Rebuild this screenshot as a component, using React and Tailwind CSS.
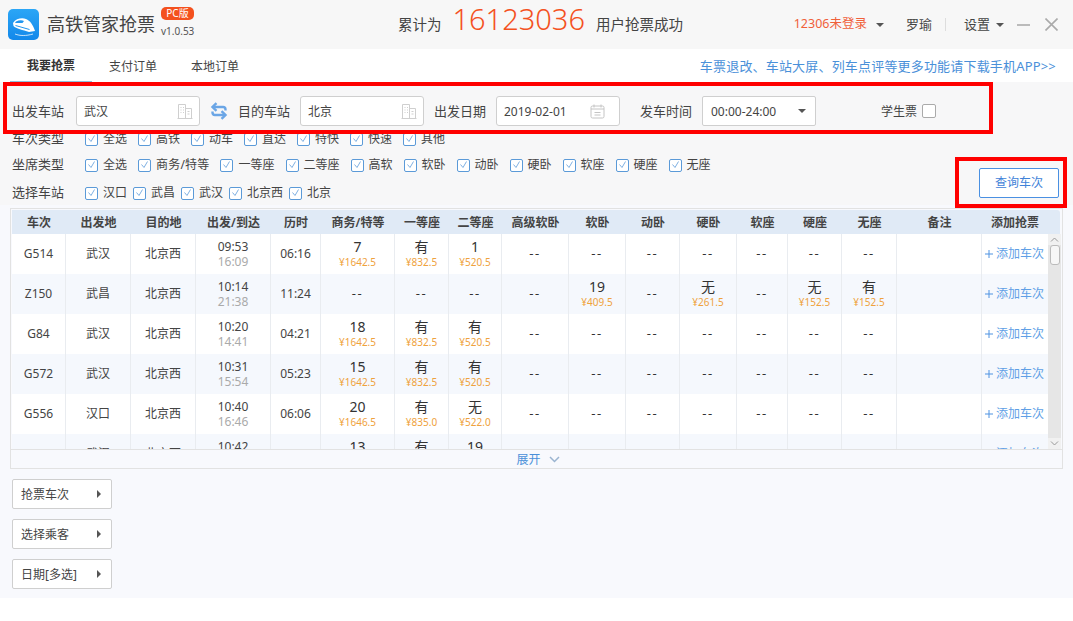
import React from 'react'

const rows = [
  { no: 'G514', from: '武汉', to: '北京西', go: '09:53', arrive: '16:09', dur: '06:16', seats: [['7', '¥1642.5'], ['有', '¥832.5'], ['1', '¥520.5'], 0, 0, 0, 0, 0, 0, 0] },
  { no: 'Z150', from: '武昌', to: '北京西', go: '10:14', arrive: '21:38', dur: '11:24', seats: [0, 0, 0, 0, ['19', '¥409.5'], 0, ['无', '¥261.5'], 0, ['无', '¥152.5'], ['有', '¥152.5']] },
  { no: 'G84', from: '武汉', to: '北京西', go: '10:20', arrive: '14:41', dur: '04:21', seats: [['18', '¥1642.5'], ['有', '¥832.5'], ['有', '¥520.5'], 0, 0, 0, 0, 0, 0, 0] },
  { no: 'G572', from: '武汉', to: '北京西', go: '10:31', arrive: '15:54', dur: '05:23', seats: [['15', '¥1642.5'], ['有', '¥832.5'], ['有', '¥520.5'], 0, 0, 0, 0, 0, 0, 0] },
  { no: 'G556', from: '汉口', to: '北京西', go: '10:40', arrive: '16:46', dur: '06:06', seats: [['20', '¥1646.5'], ['有', '¥835.0'], ['无', '¥522.0'], 0, 0, 0, 0, 0, 0, 0] },
  { no: 'G506', from: '武汉', to: '北京西', go: '10:42', arrive: '16:50', dur: '06:08', seats: [['13', '¥1642.5'], ['有', '¥832.5'], ['19', '¥520.5'], 0, 0, 0, 0, 0, 0, 0] },
]

const headers = ['车次', '出发地', '目的地', '出发/到达', '历时', '商务/特等', '一等座', '二等座', '高级软卧', '软卧', '动卧', '硬卧', '软座', '硬座', '无座', '备注', '添加抢票']

const gridCols = 'grid grid-cols-[54px_65px_65px_75px_50px_74px_54px_53px_67px_57px_54px_57px_51px_54px_55px_85px_66px]'

const Logo = () => (
  <svg width="31" height="31" viewBox="0 0 31 31">
    <path d="M5 14C8 9.500 14 8.500 18 10c4 1.500 7 6 9 12l-6 1C15 21 8 19.500 5.500 17z" fill="#fff" />
    <path d="M8 12.500c3-1.500 6-1.500 8-.5l-1.500 2H7z" fill="#2196f0" />
    <path d="M7.500 16.500l14 4" stroke="#2196f0" strokeWidth="1" fill="none" />
    <path d="M7 25c5 2 11 2 18 0" stroke="#fff" strokeWidth="1" opacity="0.75" fill="none" />
  </svg>
)

const Building = () => (
  <svg width="16" height="15" viewBox="0 0 16 15" fill="none" stroke="#cfcfcf" strokeWidth="1">
    <path d="M1.500 14.500V.500h7v14M8.500 4.500h6v10M.5 14.500h15" />
    <path d="M3.500 3.500h1M6 3.500h1M3.500 6h1M6 6h1M3.500 8.500h1M6 8.500h1M10.500 7.500h2M10.500 10h2" />
  </svg>
)

const Calendar = () => (
  <svg width="15" height="15" viewBox="0 0 15 15" fill="none" stroke="#c4c4c4" strokeWidth="1">
    <rect x="1" y="2" width="13" height="12" rx="1.500" />
    <path d="M1 5h13M4 0.500v3M11 0.500v3M4.500 8.500h6M4.500 11h6" />
  </svg>
)

const Swap = () => (
  <svg width="18" height="18" viewBox="0 0 18 18" fill="none" stroke="#6ba6e6" strokeWidth="2.400">
    <path d="M15.500 8.500V7.500C15.500 6 14.500 5 13 5H3" />
    <path d="M6.500 1.200L2.500 5l4 3.800" />
    <path d="M2.500 9.500v1C2.500 12 3.500 13 5 13h10" />
    <path d="M11.500 9.200l4 3.800-4 3.800" />
  </svg>
)

const Caret = () => (
  <span className="inline-block w-0 h-0 border-x-[4px] border-x-transparent border-t-[4px] border-t-[#555]" />
)

const Check = ({ label, gap = 'mr-[11px]' }) => (
  <span className={`flex items-center ${gap}`}>
    <span className="w-[13px] h-[13px] mr-[5px] border border-[#5b9ad8] rounded-[2px] bg-white flex items-center justify-center">
      <svg width="9" height="8" viewBox="0 0 9 8" fill="none" stroke="#7fb0e2" strokeWidth="1">
        <path d="M1.500 3.500l2.500 3 3.500-6" />
      </svg>
    </span>
    <span className={`text-[12px] text-[#444] whitespace-nowrap ${label.includes('/') ? 'tracking-[0.2px]' : ''}`}>{label}</span>
  </span>
)

const Field = ({ value, icon, className = 'pr-[6px]' }) => (
  <div className={`w-[124px] h-[30px] shrink-0 bg-white border border-[#cfcfcf] rounded-[3px] flex items-center justify-between pl-[7px] text-[12px] text-[#444] ${className}`}>
    <span className="pt-px">{value}</span>
    {icon}
  </div>
)

const FilterRow = ({ title, items, gap, className = '' }) => (
  <div className={`flex items-center h-[20px] ${className}`}>
    <span className="w-[73px] text-[13px] text-[#444] shrink-0">{title}</span>
    {items.map((item) => <Check key={item} label={item} gap={gap} />)}
  </div>
)

const SeatCell = ({ seat }) => (
  <div className="border-r border-[#e9ecf0] flex flex-col items-center justify-center">
    {seat ? (
      <div className="flex flex-col items-center pb-[2px]">
        <span className="text-[14px] leading-[18px] text-[#333]">{seat[0]}</span>
        <span className="text-[10px] leading-[13px] text-[#efa23c]">{seat[1]}</span>
      </div>
    ) : (
      <span className="text-[13px] text-[#333] tracking-[1.5px]">--</span>
    )}
  </div>
)

const Row = ({ row, odd }) => (
  <div className={`${gridCols} h-[40px] shrink-0 text-[12px] text-[#444] ${odd ? 'bg-[#f5f8fd]' : 'bg-white'}`}>
    <div className="border-r border-[#e9ecf0] flex items-center justify-center">{row.no}</div>
    <div className="border-r border-[#e9ecf0] flex items-center justify-center">{row.from}</div>
    <div className="border-r border-[#e9ecf0] flex items-center justify-center">{row.to}</div>
    <div className="border-r border-[#e9ecf0] flex flex-col items-center justify-center leading-[15px]">
      <span>{row.go}</span>
      <span className="text-[#aaa]">{row.arrive}</span>
    </div>
    <div className="border-r border-[#e9ecf0] flex items-center justify-center">{row.dur}</div>
    {row.seats.map((seat, i) => <SeatCell key={i} seat={seat} />)}
    <div className="border-r border-[#e9ecf0]" />
    <div className="flex items-center pl-[3px] text-[#5f9fe6] whitespace-nowrap">
      <svg className="mr-[3px]" width="8" height="8" viewBox="0 0 8 8" stroke="#4f93e2" strokeWidth="1">
        <path d="M4 0v8M0 4h8" />
      </svg>
      添加车次
    </div>
  </div>
)

const SideButton = ({ label }) => (
  <button className="w-[100px] h-[30px] bg-white border border-[#cfcfcf] rounded-[2px] flex items-center justify-between pl-[8px] pr-[10px] text-[12px] text-[#444]">
    <span className="pt-px">{label}</span>
    <span className="w-0 h-0 border-y-[4px] border-y-transparent border-l-[4px] border-l-[#555]" />
  </button>
)

export default function App() {
  return (
    <div className="relative w-[1073px] h-[621px] overflow-hidden bg-white font-['Noto_Sans','Noto_Sans_CJK_SC',sans-serif]">
      {/* Title bar */}
      <div className="h-[49px] bg-[#f7f7f7] flex items-center text-[#444]">
        <div className="w-[31px] h-[31px] ml-[8px] rounded-[5px] bg-gradient-to-b from-[#2ba6f6] to-[#1288ea] shrink-0">
          <Logo />
        </div>
        <span className="ml-[8px] text-[18px] text-[#444] whitespace-nowrap">高铁管家抢票</span>
        <div className="ml-[6px] w-[33px] flex flex-col items-start self-start mt-[7px]">
          <span className="w-[33px] h-[13px] rounded-[5px] bg-[#f4511e] text-white text-[10px] leading-[13px] text-center whitespace-nowrap">PC版</span>
          <span className="mt-[4px] text-[10px] leading-[14px] text-[#555]">v1.0.53</span>
        </div>
        <div className="ml-[204px] flex items-center whitespace-nowrap text-[14.500px]">
          <span>累计为</span>
          <span className="ml-[11px] mr-[11px] mb-[12px] text-[29px] leading-none font-light text-[#f4511e]">16123036</span>
          <span>用户抢票成功</span>
        </div>
        <div className="ml-auto flex items-center whitespace-nowrap text-[13px]">
          <span className="text-[12.500px] text-[#f0603a]">12306未登录</span>
          <span className="ml-[9px] flex"><Caret /></span>
          <span className="ml-[22px]">罗瑜</span>
          <span className="ml-[13px] w-px h-[13px] bg-[#ddd]" />
          <span className="ml-[18px]">设置</span>
          <span className="ml-[6px] flex"><Caret /></span>
          <span className="ml-[13px] w-[13px] h-[2px] bg-[#bbb]" />
          <svg className="ml-[15px] mr-[15px]" width="13" height="13" viewBox="0 0 13 13" stroke="#aaa" strokeWidth="1.600">
            <path d="M.5.500l12 12M12.500.500l-12 12" />
          </svg>
        </div>
      </div>

      {/* Tabs */}
      <div className="h-[33px] bg-white flex items-start">
        <div className="ml-[10px] w-[82px] h-[33px] border-b border-[#8fc0dc] flex items-center justify-center text-[12px] font-semibold text-[#333] pt-px">我要抢票</div>
        <div className="ml-[17px] w-[48px] h-[33px] flex items-center text-[12px] text-[#444] whitespace-nowrap pt-[3px]">支付订单</div>
        <div className="ml-[34px] w-[48px] h-[33px] flex items-center text-[12px] text-[#444] whitespace-nowrap pt-[3px]">本地订单</div>
        <div className="ml-auto mr-[17px] h-[33px] pt-[3px] flex items-center text-[13px] tracking-[0.18px] text-[#4a90d9] whitespace-nowrap">车票退改、车站大屏、列车点评等更多功能请下载手机APP&gt;&gt;</div>
      </div>

      {/* Search + filters */}
      <div className="bg-[#f7f7f8] h-[123px] pt-[14px]">
        <div className="flex items-center h-[30px] pl-[12px]">
          <span className="w-[64px] pt-px text-[13px] text-[#444]">出发车站</span>
          <Field value="武汉" icon={<Building />} />
          <span className="w-[38px] flex justify-center"><Swap /></span>
          <span className="w-[62px] pt-px text-[13px] text-[#444]">目的车站</span>
          <Field value="北京" icon={<Building />} />
          <span className="w-[72px] pt-px text-center text-[13px] text-[#444]">出发日期</span>
          <Field value="2019-02-01" icon={<Calendar />} className="pr-[14px]" />
          <span className="w-[82px] pt-px pr-[10px] text-right text-[13px] text-[#444]">发车时间</span>
          <div className="w-[114px] h-[30px] bg-white border border-[#cfcfcf] rounded-[2px] flex items-center justify-between pl-[8px] pr-[9px] text-[12px] text-[#444]">
            <span className="pt-px">00:00-24:00</span>
            <Caret />
          </div>
          <span className="ml-[65px] pt-px text-[12px] text-[#444]">学生票</span>
          <span className="ml-[5px] w-[14px] h-[14px] bg-white border border-[#aaa] rounded-[2px]" />
        </div>

        <div className="flex justify-between pl-[12px] pr-[14px]">
          <div className="pt-[3px]">
            <FilterRow title="车次类型" items={['全选', '高铁', '动车', '直达', '特快', '快速', '其他']} />
            <FilterRow title="坐席类型" className="mt-[6px]" items={['全选', '商务/特等', '一等座', '二等座', '高软', '软卧', '动卧', '硬卧', '软座', '硬座', '无座']} />
            <FilterRow title="选择车站" className="mt-[8px]" gap="mr-[6px]" items={['汉口', '武昌', '武汉', '北京西', '北京']} />
          </div>
          <button className="mt-[42px] w-[80px] h-[30px] bg-white border border-[#4a90e2] rounded-[2px] text-[12px] text-[#3f82d8]">查询车次</button>
        </div>
      </div>

      {/* Lower area */}
      <div className="bg-[#f8f9fd] h-[393px] pt-[3px]">
        <div className="mx-[10px] w-[1053px] h-[261px] border border-[#e2e2e2] p-px pb-0 flex flex-col">
          <div className={`${gridCols} w-[1036px] h-[24px] shrink-0 bg-[#e0eaf6] rounded-tr-[3px] text-[12px] font-semibold text-[#444] pr-[12px] box-content`}>
            {headers.map((h) => (
              <div key={h} className="flex items-center justify-center whitespace-nowrap pt-px">{h}</div>
            ))}
          </div>
          <div className="h-[215px] flex shrink-0 overflow-hidden">
            <div className="w-[1036px] flex flex-col overflow-hidden shrink-0">
              {rows.map((row, i) => <Row key={row.no} row={row} odd={i % 2 === 1} />)}
            </div>
            <div className="w-[13px] bg-[#e6e6e6] flex flex-col items-center">
              <div className="w-full h-[11px] bg-[#f1f1f1] flex items-center justify-center">
                <svg width="9" height="5" viewBox="0 0 9 5" fill="none" stroke="#999"><path d="M1 4.500l3.500-3.500 3.500 3.500" /></svg>
              </div>
              <span className="w-[10px] h-[20px] bg-[#f7f7f7] border border-[#bbb] rounded-[3px]" />
              <div className="mt-auto w-full h-[11px] bg-[#f1f1f1] flex items-center justify-center">
                <svg width="9" height="5" viewBox="0 0 9 5" fill="none" stroke="#999"><path d="M1 .500l3.500 3.500 3.500-3.500" /></svg>
              </div>
            </div>
          </div>
          <div className="h-[19px] border-t border-[#e2e2e2] -mx-px pl-[3px] pt-px flex items-center justify-center text-[12px] text-[#4a90d9]">
            <span>展开</span>
            <svg className="ml-[8px]" width="11" height="7" viewBox="0 0 11 7" fill="none" stroke="#9ab4d0" strokeWidth="1.500"><path d="M1 1l4.500 4.500L10 1" /></svg>
          </div>
        </div>

        <div className="mt-[10px] ml-[12px] flex flex-col gap-[10px]">
          <SideButton label="抢票车次" />
          <SideButton label="选择乘客" />
          <SideButton label="日期[多选]" />
        </div>
      </div>

      {/* Red annotation boxes */}
      <div className="absolute left-[3px] top-[82px] w-[990px] h-[52px] border-[4px] border-[#f00] pointer-events-none" />
      <div className="absolute left-[955px] top-[157px] w-[112px] h-[51px] border-[4px] border-[#f00] pointer-events-none" />
    </div>
  )
}
